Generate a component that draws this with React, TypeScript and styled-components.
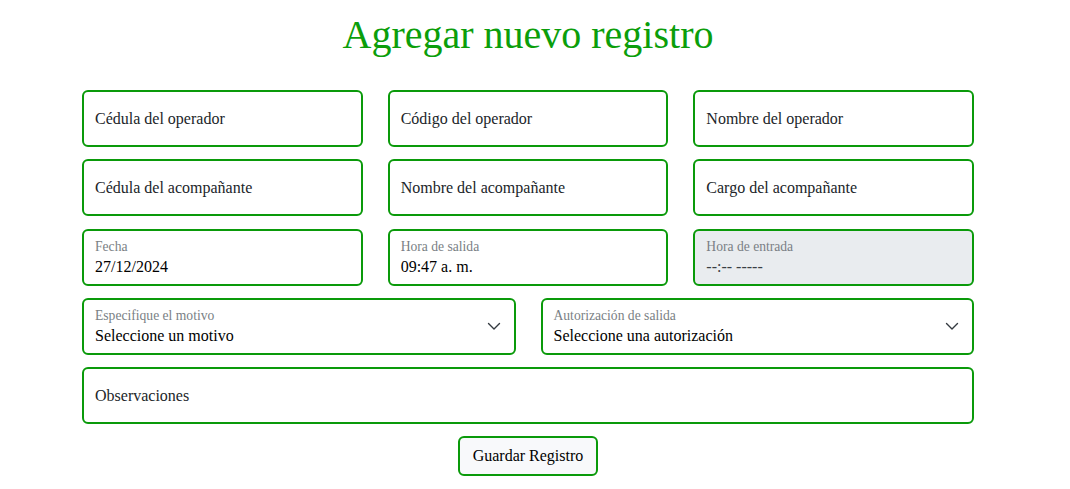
import React from "react";
import styled, { createGlobalStyle } from "styled-components";

const GREEN = "#0a9a0a";

const Global = createGlobalStyle`
  html, body { margin: 0; padding: 0; background: #fff; }
  body { font-family: "Liberation Serif", "Times New Roman", serif; color: #212529; }
`;

const Page = styled.div`
  width: 1056px;
  padding-top: 12px;
`;

const Title = styled.h1`
  margin: 0 0 32px 0;
  text-align: center;
  font-size: 40px;
  font-weight: 400;
  line-height: 46px;
  color: #0b9e0b;
`;

const Form = styled.form`
  margin: 0 0 0 82px;
  width: 892px;
  display: flex;
  flex-direction: column;
  gap: 12.25px;
`;

const Row = styled.div<{ $cols: number }>`
  display: grid;
  grid-template-columns: repeat(${(p) => p.$cols}, 1fr);
  column-gap: 25px;
`;

const Box = styled.div<{ $disabled?: boolean }>`
  position: relative;
  box-sizing: border-box;
  height: 57px;
  border: 2px solid ${GREEN};
  border-radius: 6px;
  background: ${(p) => (p.$disabled ? "#e9ecef" : "#fff")};
  padding: 0 11px;
  display: flex;
  flex-direction: column;
  justify-content: center;
`;

const Placeholder = styled.span`
  font-size: 16px;
  color: #212529;
  line-height: 20px;
`;

const SmallLabel = styled.span`
  font-size: 13.6px;
  color: #7a7f85;
  line-height: 16px;
  margin-top: 2px;
`;

const Value = styled.span<{ $muted?: boolean }>`
  font-size: 16px;
  line-height: 22px;
  color: ${(p) => (p.$muted ? "#3a3f44" : "#000")};
  margin-top: 1px;
`;

const Chevron = styled.svg`
  position: absolute;
  right: 12px;
  top: 50%;
  transform: translateY(-50%);
  width: 16px;
  height: 16px;
`;

const ButtonRow = styled.div`
  display: flex;
  justify-content: center;
  margin-top: -0.5px;
`;

const SaveButton = styled.button`
  box-sizing: border-box;
  height: 40px;
  padding: 0 12.5px;
  border: 2px solid ${GREEN};
  border-radius: 6px;
  background: #f8f9fb;
  font-family: "Liberation Serif", "Times New Roman", serif;
  font-size: 16px;
  color: #000;
  cursor: pointer;
`;

const Simple = ({ text }: { text: string }) => (
  <Box>
    <Placeholder>{text}</Placeholder>
  </Box>
);

const Floating = ({
  label,
  value,
  disabled,
  select,
}: {
  label: string;
  value: string;
  disabled?: boolean;
  select?: boolean;
}) => (
  <Box $disabled={disabled}>
    <SmallLabel>{label}</SmallLabel>
    <Value $muted={disabled}>{value}</Value>
    {select && (
      <Chevron viewBox="0 0 16 16">
        <path
          d="m2.5 5.5 5.5 5.5 5.5-5.5"
          fill="none"
          stroke="#343a40"
          strokeWidth="1.4"
          strokeLinecap="round"
          strokeLinejoin="round"
        />
      </Chevron>
    )}
  </Box>
);

export default function App() {
  return (
    <Page>
      <Global />
      <Title>Agregar nuevo registro</Title>
      <Form onSubmit={(e) => e.preventDefault()}>
        <Row $cols={3}>
          <Simple text="Cédula del operador" />
          <Simple text="Código del operador" />
          <Simple text="Nombre del operador" />
        </Row>
        <Row $cols={3}>
          <Simple text="Cédula del acompañante" />
          <Simple text="Nombre del acompañante" />
          <Simple text="Cargo del acompañante" />
        </Row>
        <Row $cols={3}>
          <Floating label="Fecha" value="27/12/2024" />
          <Floating label="Hora de salida" value="09:47 a. m." />
          <Floating label="Hora de entrada" value="--:-- -----" disabled />
        </Row>
        <Row $cols={2}>
          <Floating label="Especifique el motivo" value="Seleccione un motivo" select />
          <Floating label="Autorización de salida" value="Seleccione una autorización" select />
        </Row>
        <Row $cols={1}>
          <Simple text="Observaciones" />
        </Row>
        <ButtonRow>
          <SaveButton type="submit">Guardar Registro</SaveButton>
        </ButtonRow>
      </Form>
    </Page>
  );
}
